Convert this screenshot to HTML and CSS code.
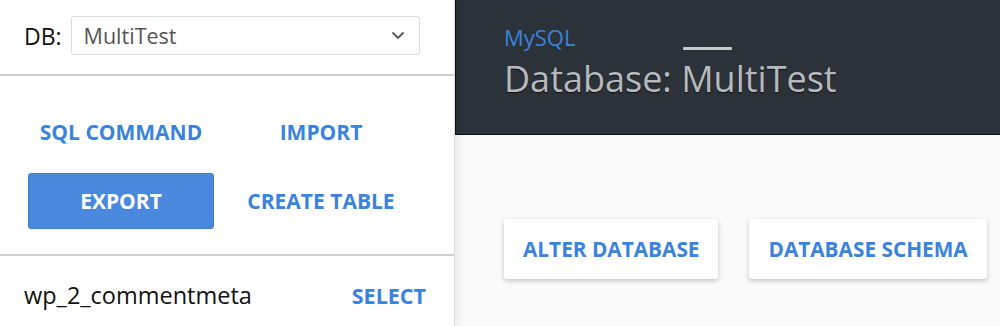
FILE: index.html
```html
<!DOCTYPE html>
<html lang="en">
<head>
  <meta charset="UTF-8" />
  <title>Adminer | MultiTest</title>
  <link rel="stylesheet" href="styles.css">
</head>
<body>
  <aside class="sidebar">
    <div class="db-picker">
      <label for="db">DB:</label>
      <div class="select-box">
        <span>MultiTest</span>
        <svg class="chevron" width="14" height="9" viewBox="0 0 14 9">
          <path d="M1.5 1.5 L7 7 L12.5 1.5" fill="none" stroke="#555" stroke-width="1.8" />
        </svg>
      </div>
    </div>

    <!-- Actions -->
    <div class="actions">
      <a href="#" class="action">SQL COMMAND</a>
      <a href="#" class="action">IMPORT</a>
      <a href="#" class="action active">EXPORT</a>
      <a href="#" class="action">CREATE TABLE</a>
    </div>

    <div class="table-row">
      <span class="table-name">wp_2_commentmeta</span>
      <a href="#" class="table-link">SELECT</a>
    </div>
  </aside>

  <main class="content">
    <header class="top">
      <div class="crumbs">
        <a href="#">MySQL</a>
        <span class="dash"></span>
      </div>
      <h1>Database: MultiTest</h1>
    </header>

    <div class="buttons">
      <a href="#" class="card-btn">ALTER DATABASE</a>
      <a href="#" class="card-btn">DATABASE SCHEMA</a>
    </div>
  </main>
</body>
</html>
```

FILE: styles.css
```css
* {
  margin: 0;
  padding: 0;
  box-sizing: border-box;
  font-family: 'Open Sans', sans-serif;
}

body {
  display: flex;
  height: 326px;
  overflow: hidden;
  background: #fafafa;
}

a {
  text-decoration: none;
  color: #3a83dc;
}

/* Sidebar */
.sidebar {
  width: 455px;
  background: #fff;
  border-right: 1px solid #ddd;
  position: relative;
  z-index: 2;
  box-shadow: 3px 0 8px rgba(0,0,0,0.08);
}

.db-picker {
  display: flex;
  align-items: center;
  gap: 9px;
  padding: 16px 0 19px 24px;
  border-bottom: 2px solid #d0d0d0;
}

.db-picker label {
  font-size: 23px;
  color: #111;
}

.select-box {
  width: 349px;
  height: 39px;
  border: 1px solid #dcdcdc;
  border-radius: 3px;
  display: flex;
  align-items: center;
  justify-content: space-between;
  padding: 0 14px 0 12px;
  font-size: 21.5px;
  color: #555;
}

.actions {
  display: grid;
  grid-template-columns: 186px 186px;
  grid-auto-rows: 56px;
  column-gap: 14px;
  row-gap: 13px;
  padding: 28px 0 25px 28px;
  border-bottom: 2px solid #d0d0d0;
}

.action {
  display: flex;
  align-items: center;
  justify-content: center;
  font-size: 21px;
  font-weight: 700;
  border-radius: 3px;
}

.action.active {
  background: #4a88de;
  color: #fff;
  border: 1px solid #3f7ad0;
}

.table-row {
  display: flex;
  justify-content: space-between;
  align-items: center;
  padding: 23px 28px 0 24px;
}

.table-name {
  font-size: 23.5px;
  color: #111;
}

.table-link {
  font-size: 21.5px;
  font-weight: 700;
}

/* Main */
.content {
  flex: 1;
}

.top {
  height: 135px;
  background: #2b323a;
  border-left: 1px solid #111;
  border-bottom: 1px solid #111;
  padding: 21px 0 0 48px;
}

.crumbs {
  display: flex;
  align-items: center;
  gap: 108px;
  height: 32px;
}

.crumbs a {
  font-size: 22px;
}

.dash {
  width: 49px;
  height: 3px;
  background: #c8cbcc;
  border-radius: 1px;
  margin-top: 22px;
}

.top h1 {
  font-weight: 400;
  font-size: 36px;
  line-height: 48px;
  color: #b6babe;
  margin-top: 2px;
  text-shadow: 0 1px 1px #111;
}

.buttons {
  display: flex;
  gap: 31px;
  padding: 84px 0 0 49px;
}

.card-btn {
  height: 60px;
  padding: 0 19px;
  display: flex;
  align-items: center;
  background: #fff;
  border-radius: 3px;
  box-shadow: 0 2px 5px rgba(0,0,0,0.22);
  font-size: 20.8px;
  font-weight: 700;
}
```
